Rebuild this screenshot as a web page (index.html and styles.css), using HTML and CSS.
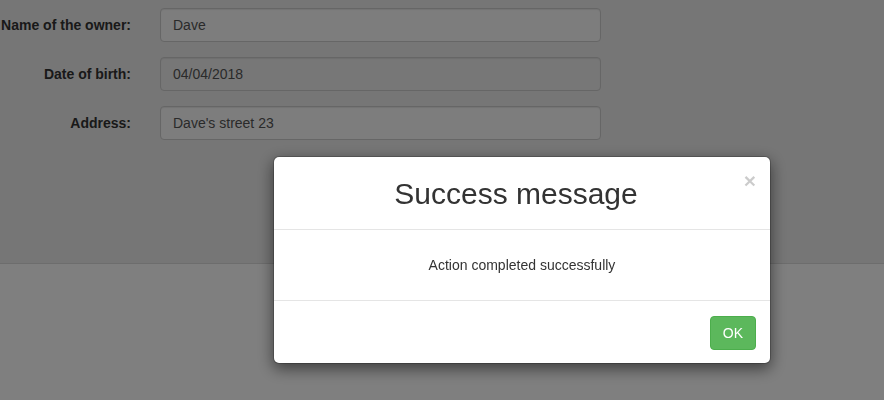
FILE: index.html
```html
<!DOCTYPE html>
<html>
<head>
<meta charset="utf-8">
<link rel="stylesheet" href="styles.css">
</head>
<body>
<section class="panel">
  <form class="form">
    <label class="label">Name of the owner:</label>
    <div class="input">Dave</div>
    <label class="label">Date of birth:</label>
    <div class="input readonly">04/04/2018</div>
    <label class="label">Address:</label>
    <div class="input">Dave's street 23</div>
  </form>
</section>
<div class="backdrop"></div>
<div class="modal-wrap">
  <div class="modal">
    <div class="modal-header">
      <h4 class="modal-title">Success message</h4>
      <span class="close">&times;</span>
    </div>
    <div class="modal-body">Action completed successfully</div>
    <div class="modal-footer">
      <button class="btn-ok">OK</button>
    </div>
  </div>
</div>
</body>
</html>
```
FILE: styles.css
```css
html, body {
  margin: 0;
  padding: 0;
  background: #fff;
  font-family: "Liberation Sans", Arial, sans-serif;
  font-size: 14px;
  color: #333;
}
.panel {
  background: #ececec;
  border-bottom: 1px solid #dadada;
  height: 264px;
  padding-top: 8px;
  box-sizing: border-box;
}
.form {
  display: grid;
  grid-template-columns: 131px 441px;
  column-gap: 29px;
  row-gap: 15px;
}
.label {
  font-weight: bold;
  text-align: right;
  line-height: 20px;
  padding-top: 7px;
  white-space: nowrap;
}
.input {
  height: 34px;
  box-sizing: border-box;
  border: 1px solid #ccc;
  border-radius: 4px;
  background: #fafafa;
  padding: 6px 12px;
  line-height: 20px;
  color: #555;
  box-shadow: inset 0 1px 1px rgba(0,0,0,.075);
}
.input.readonly {
  background: #eee;
}
.backdrop {
  position: fixed;
  inset: 0;
  background: rgba(0,0,0,.5);
}
.modal-wrap {
  position: fixed;
  inset: 0;
  padding-top: 156px;
  padding-left: 273px;
}
.modal {
  width: 498px;
  box-sizing: border-box;
  background: #fff;
  border: 1px solid rgba(0,0,0,.2);
  border-radius: 6px;
  box-shadow: 0 5px 15px rgba(0,0,0,.5);
  background-clip: padding-box;
}
.modal-header {
  position: relative;
  padding: 15px 27px 14px 15px;
  border-bottom: 1px solid #e5e5e5;
}
.modal-title {
  margin: 0;
  font-size: 30px;
  font-weight: normal;
  line-height: 43px;
  text-align: center;
  color: #333;
}
.close {
  position: absolute;
  right: 14px;
  top: 13px;
  font-size: 21px;
  font-weight: bold;
  line-height: 1;
  color: #000;
  opacity: .2;
}
.modal-body {
  padding: 25px 15px;
  line-height: 20px;
  text-align: center;
}
.modal-footer {
  display: flex;
  justify-content: flex-end;
  padding: 15px 14px 13px;
  border-top: 1px solid #e5e5e5;
}
.btn-ok {
  font-family: "Liberation Sans", Arial, sans-serif;
  font-size: 14px;
  line-height: 20px;
  padding: 6px 12px;
  color: #fff;
  background: #5cb85c;
  border: 1px solid #4cae4c;
  border-radius: 4px;
}
```
